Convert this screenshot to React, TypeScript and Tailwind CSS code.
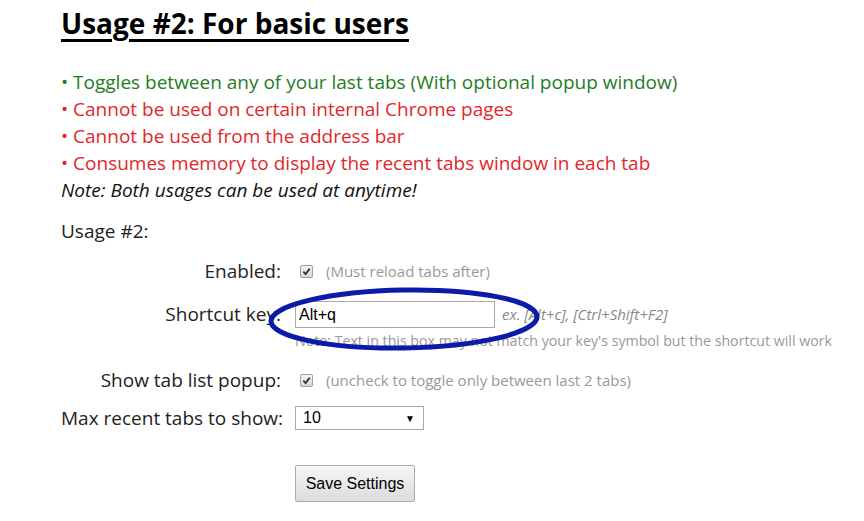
import React from 'react';

const Checkbox = () => (
  <span className="ml-[5px] inline-flex h-[13px] w-[13px] items-center justify-center rounded-[2px] border border-[#a0a0a0] bg-gradient-to-b from-[#f4f4f4] to-[#d8d8d8]">
    <svg width="9" height="9" viewBox="0 0 10 10">
      <path d="M1.5 5.2 L4 7.8 L8.6 1.8" fill="none" stroke="#333" strokeWidth="2" />
    </svg>
  </span>
);

const Row = ({ label, className, children }: { label: string; className: string; children: React.ReactNode }) => (
  <div className={`flex items-center ${className}`}>
    <div className="w-[220px] whitespace-nowrap text-right">{label}</div>
    <div className="ml-[14px] flex items-center">{children}</div>
  </div>
);

export default function App() {
  return (
    <div className="relative min-h-[521px] bg-white pl-[61px] font-['Open_Sans',sans-serif] text-[19px] text-[#222]">
      <h1 className="pt-[5px] text-[28px] font-bold leading-[36px] text-black underline decoration-[3px] underline-offset-[5px]">
        Usage #2: For basic users
      </h1>

      <div className="mt-[28px] leading-[27px]">
        <div className="text-[#237d23]">• Toggles between any of your last tabs (With optional popup window)</div>
        <div className="text-[#e3262b]">• Cannot be used on certain internal Chrome pages</div>
        <div className="text-[#e3262b]">• Cannot be used from the address bar</div>
        <div className="text-[#e3262b]">• Consumes memory to display the recent tabs window in each tab</div>
        <div className="italic text-[#111]">Note: Both usages can be used at anytime!</div>
      </div>

      <div className="mt-[14px] leading-[27px]">Usage #2:</div>

      <Row label="Enabled:" className="mt-[12px] h-[28px]">
        <Checkbox />
        <span className="ml-[13px] text-[15px] text-[#999]">(Must reload tabs after)</span>
      </Row>

      <Row label="Shortcut key:" className="mt-[15px] h-[29px]">
        <div className="flex h-[27px] w-[200px] items-center border border-[#a9a9a9] px-[3px] font-['Liberation_Sans',sans-serif] text-[16px] text-black">
          Alt+q
        </div>
        <span className="ml-[7px] text-[15px] italic text-[#888]">ex. [Alt+c], [Ctrl+Shift+F2]</span>
      </Row>

      <div className="ml-[234px] mt-[2px] h-[20px] whitespace-nowrap text-[14.2px] leading-[20px] text-[#999]">
        Note: Text in this box may not match your key's symbol but the shortcut will work
      </div>

      <Row label="Show tab list popup:" className="mt-[15px] h-[28px]">
        <Checkbox />
        <span className="ml-[13px] text-[15px] text-[#999]">(uncheck to toggle only between last 2 tabs)</span>
      </Row>

      <Row label="Max recent tabs to show:" className="mt-[11px] h-[26px]">
        <div className="flex h-[24px] w-[129px] items-center justify-between border border-[#a9a9a9] pl-[7px] pr-[8px] font-['Liberation_Sans',sans-serif] text-[16px] text-black">
          <span>10</span>
          <span className="text-[10px]">▼</span>
        </div>
      </Row>

      <div className="ml-[234px] mt-[34px]">
        <button className="h-[37px] w-[120px] rounded-[2px] border border-[#adadad] bg-gradient-to-b from-[#f6f6f6] to-[#dcdcdc] font-['Liberation_Sans',sans-serif] text-[16px] text-black">
          Save Settings
        </button>
      </div>

      <svg className="absolute left-[265px] top-[285px]" width="280" height="70" viewBox="0 0 280 70">
        <ellipse cx="139" cy="34" rx="133" ry="29" fill="none" stroke="#0b1aa8" strokeWidth="5" transform="rotate(-1 139 34)" />
      </svg>
    </div>
  );
}
